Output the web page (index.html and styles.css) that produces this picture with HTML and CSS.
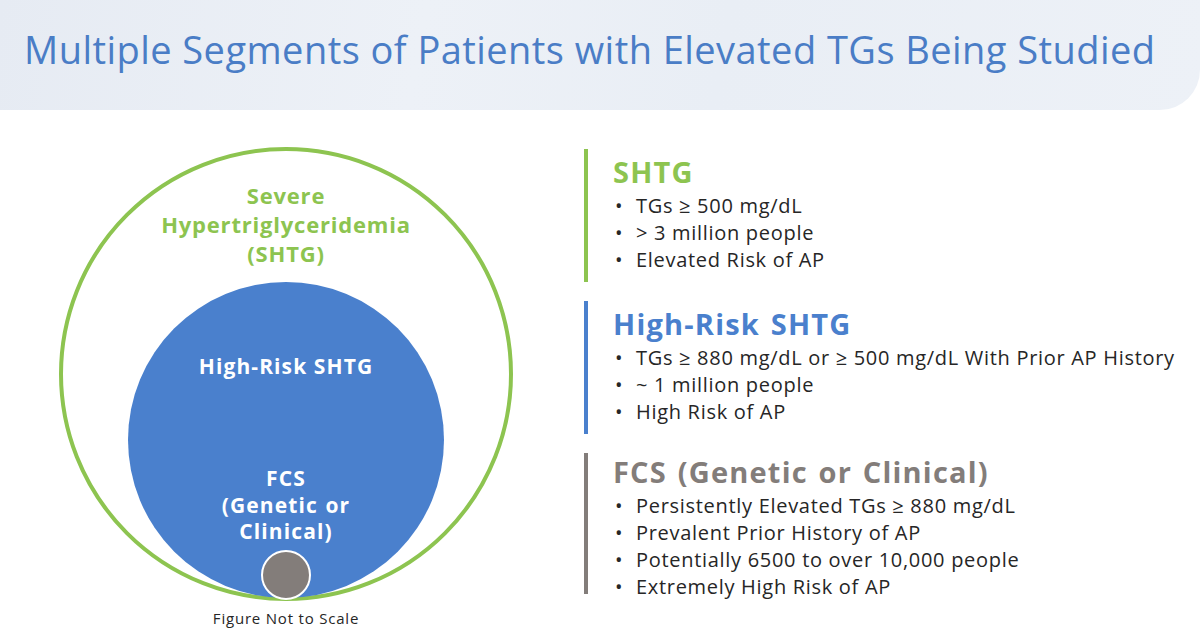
FILE: index.html
```html
<!DOCTYPE html>
<html lang="en">
<head>
<meta charset="utf-8">
<title>Multiple Segments of Patients with Elevated TGs Being Studied</title>
<link rel="stylesheet" href="styles.css">
</head>
<body>
<header class="banner">
  <h1 class="title">Multiple Segments of Patients with Elevated TGs Being Studied</h1>
</header>
<main class="content">
  <section class="diagram">
    <div class="ring-outer">
      <div class="label-outer">Severe<br>Hypertriglyceridemia<br>(SHTG)</div>
      <div class="ring-blue">
        <div class="label-blue">High-Risk SHTG</div>
        <div class="label-fcs">FCS<br>(Genetic or<br>Clinical)</div>
        <div class="dot-gray"></div>
      </div>
    </div>
    <div class="caption">Figure Not to Scale</div>
  </section>
  <section class="segments">
    <div class="seg seg-green">
      <h2 class="seg-title">SHTG</h2>
      <ul class="bullets">
        <li>TGs ≥ 500 mg/dL</li>
        <li>&gt; 3 million people</li>
        <li>Elevated Risk of AP</li>
      </ul>
    </div>
    <div class="seg seg-blue">
      <h2 class="seg-title">High-Risk SHTG</h2>
      <ul class="bullets">
        <li>TGs ≥ 880 mg/dL or ≥ 500 mg/dL With Prior AP History</li>
        <li>~ 1 million people</li>
        <li>High Risk of AP</li>
      </ul>
    </div>
    <div class="seg seg-gray">
      <h2 class="seg-title">FCS (Genetic or Clinical)</h2>
      <ul class="bullets">
        <li>Persistently Elevated TGs ≥ 880 mg/dL</li>
        <li>Prevalent Prior History of AP</li>
        <li>Potentially 6500 to over 10,000 people</li>
        <li>Extremely High Risk of AP</li>
      </ul>
    </div>
  </section>
</main>
</body>
</html>
```

FILE: styles.css
```css
* { box-sizing: border-box; }
html, body { margin: 0; padding: 0; }
body {
  width: 1200px;
  height: 636px;
  overflow: hidden;
  background: #ffffff;
  font-family: "Open Sans", "DejaVu Sans", sans-serif;
  color: #262626;
}

.banner {
  height: 110px;
  background: linear-gradient(100deg, #e6ebf3 0%, #edf1f7 35%, #e9eef5 60%, #edf1f7 100%);
  border-bottom-right-radius: 40px;
  display: flex;
  align-items: center;
  padding-left: 24px;
}
.title {
  margin: 0;
  margin-top: -12px;
  font-weight: 400;
  font-size: 38px;
  letter-spacing: 0.45px;
  color: #4a7dc6;
  white-space: nowrap;
}

.content {
  display: flex;
  padding-top: 37px;
  padding-left: 59px;
  gap: 71px;
}

.diagram {
  width: 454px;
  display: flex;
  flex-direction: column;
  align-items: center;
}
.ring-outer {
  width: 454px;
  height: 454px;
  border: 4px solid #8dc450;
  border-radius: 50%;
  display: flex;
  flex-direction: column;
  align-items: center;
}
.label-outer {
  padding-top: 30px;
  text-align: center;
  color: #8dc450;
  font-weight: 700;
  font-size: 22px;
  letter-spacing: 0.8px;
  line-height: 29px;
}
.ring-blue {
  margin-top: auto;
  margin-bottom: -1px;
  width: 316px;
  height: 316px;
  border-radius: 50%;
  background: #4a80cd;
  display: flex;
  flex-direction: column;
  align-items: center;
  color: #ffffff;
  font-weight: 700;
  text-align: center;
}
.label-blue {
  padding-top: 70px;
  font-size: 21px;
  letter-spacing: 1.1px;
  line-height: 28px;
}
.label-fcs {
  margin-top: 85px;
  font-size: 21px;
  letter-spacing: 1.1px;
  word-spacing: 1px;
  line-height: 26.5px;
}
.dot-gray {
  margin-top: auto;
  margin-bottom: -2px;
  width: 50px;
  height: 50px;
  border-radius: 50%;
  background: #837d7a;
  border: 2px solid #ffffff;
}
.caption {
  margin-top: 8px;
  font-size: 15px;
  letter-spacing: 0.8px;
  line-height: 18px;
  color: #262626;
}

.segments {
  padding-top: 2px;
  display: flex;
  flex-direction: column;
  gap: 19px;
}
.seg {
  border-left: 4px solid;
  padding-left: 25px;
  padding-top: 6px;
  padding-bottom: 9px;
}
.seg-green { border-color: #8dc450; }
.seg-blue { border-color: #4a80cd; }
.seg-gray { border-color: #837d7a; height: 141px; padding-top: 2px; padding-bottom: 0; }

.seg-title {
  margin: 0 0 3px 0;
  font-size: 29px;
  letter-spacing: 1.2px;
  word-spacing: 2px;
  line-height: 34px;
  font-weight: 700;
}
.seg-green .seg-title { color: #8dc450; }
.seg-blue .seg-title { color: #4a80cd; }
.seg-gray .seg-title { color: #837d7a; }

.bullets {
  list-style: none;
  margin: 0;
  padding: 0;
}
.bullets li {
  display: flex;
  font-size: 20px;
  letter-spacing: 0.7px;
  line-height: 27px;
  white-space: nowrap;
}
.bullets li::before {
  content: "•";
  width: 21px;
  flex: none;
  padding-left: 2px;
}
```
